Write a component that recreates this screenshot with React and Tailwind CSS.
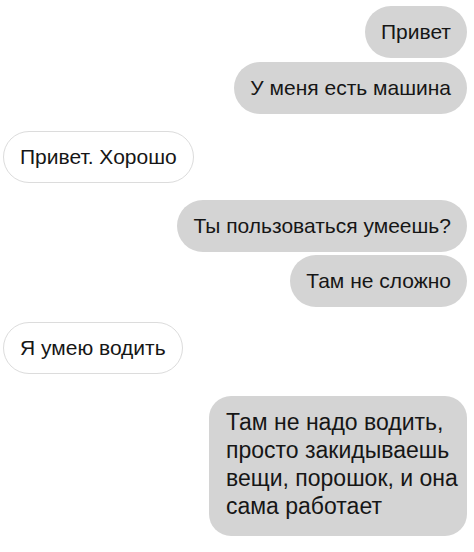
import React from 'react';

const Bubble = ({ text, mine, className = '' }) => (
  <div
    className={`rounded-full px-4 h-[52px] flex items-center text-[21px] leading-[26px] text-[#161616] ${
      mine ? 'self-end bg-[#d4d4d4]' : 'self-start bg-white border border-[#dcdcdc]'
    } ${className}`}
  >
    {text}
  </div>
);

export default function App() {
  return (
    <div
      className="w-[474px] h-[552px] bg-white flex flex-col pl-[3px] pr-[7px] pt-[6px]"
      style={{ fontFamily: '"Liberation Sans", Arial, sans-serif' }}
    >
      <Bubble mine text="Привет" />
      <Bubble mine text="У меня есть машина" className="mt-[4px]" />
      <Bubble text="Привет. Хорошо" className="mt-[17px]" />
      <Bubble mine text="Ты пользоваться умеешь?" className="mt-[17px]" />
      <Bubble mine text="Там не сложно" className="mt-[3px]" />
      <Bubble text="Я умею водить" className="mt-[15px]" />
      <div className="self-end mt-[22px] w-[258px] bg-[#d4d4d4] rounded-[22px] pl-[17px] pr-2 pt-[12px] pb-[16px] text-[23px] leading-[28px] text-[#161616]">
        Там не надо водить, просто закидываешь вещи, порошок, и она сама работает
      </div>
    </div>
  );
}
